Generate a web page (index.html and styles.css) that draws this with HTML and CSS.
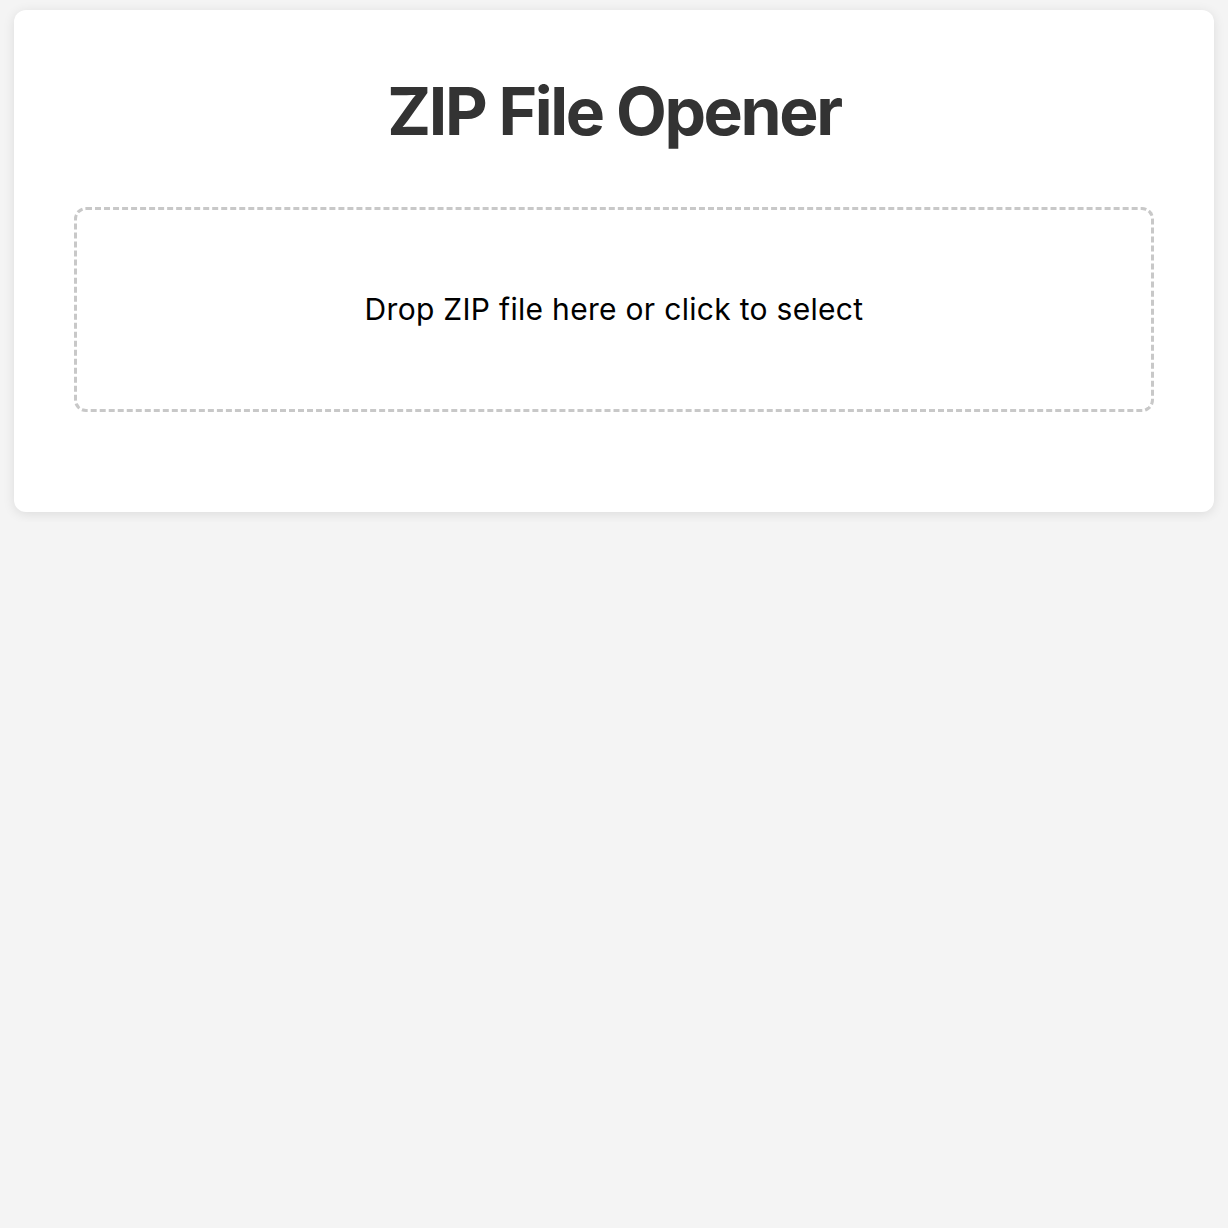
FILE: index.html
```html
<!DOCTYPE html>
<html lang="en">
<head>
<meta charset="utf-8">
<title>ZIP File Opener</title>
<link rel="stylesheet" href="styles.css">
</head>
<body>
<div class="card">
  <h1 class="title">ZIP File Opener</h1>
  <div class="dropzone">
    <p class="drop-text">Drop ZIP file here or click to select</p>
  </div>
  <div class="file-list"></div>
</div>
</body>
</html>
```
FILE: styles.css
```css
html, body {
  margin: 0;
}
body {
  padding: 10px;
  background: #f4f4f4;
  font-family: Inter, "Noto Sans", sans-serif;
}
.card {
  max-width: 1200px;
  box-sizing: border-box;
  margin: 0 auto;
  background: #fff;
  border-radius: 12px;
  box-shadow: 0 2px 12px rgba(0, 0, 0, 0.1);
  padding: 57px 60px 59px;
}
.title {
  margin: 0 0 52px;
  text-align: center;
  font-size: 66px;
  line-height: 88px;
  font-weight: 700;
  color: #333;
  letter-spacing: -2.4px;
}
.dropzone {
  border: 3px dashed #c8c8c8;
  border-radius: 12px;
  padding: 81px 20px 82px;
  text-align: center;
}
.drop-text {
  margin: 0;
  font-size: 30px;
  line-height: 36px;
  letter-spacing: 0.3px;
  color: #000;
}
.file-list {
  height: 41px;
}
```
